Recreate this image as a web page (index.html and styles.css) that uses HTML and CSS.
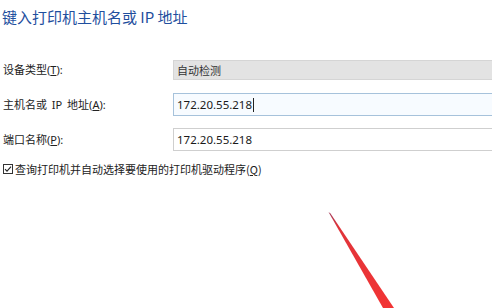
FILE: index.html
```html
<!DOCTYPE html>
<html lang="zh-CN">
<head>
<meta charset="utf-8">
<title>键入打印机主机名或 IP 地址</title>
<link rel="stylesheet" href="styles.css">
</head>
<body>
<div class="page">
  <h1 class="title">键入打印机主机名或 IP 地址</h1>
  <div class="form">
    <div class="row">
      <label class="label">设备类型(<u>T</u>):</label>
      <div class="field field-readonly">自动检测</div>
    </div>
    <div class="row">
      <label class="label">主机名或 IP 地址(<u>A</u>):</label>
      <div class="field field-focus">172.20.55.218<span class="caret"></span></div>
    </div>
    <div class="row">
      <label class="label">端口名称(<u>P</u>):</label>
      <div class="field">172.20.55.218</div>
    </div>
  </div>
  <div class="check-row">
    <svg class="checkbox" width="10" height="10" viewBox="0 0 10 10">
      <rect x="0.5" y="0.5" width="9" height="9" fill="#fff" stroke="#333" stroke-width="1"/>
      <path d="M2 5.2 L4 7.2 L8 2.6" fill="none" stroke="#222" stroke-width="1.1"/>
    </svg>
    <span class="check-text">查询打印机并自动选择要使用的打印机驱动程序(<u>Q</u>)</span>
  </div>
</div>
<svg class="arrow" width="492" height="308" viewBox="0 0 492 308">
  <defs>
    <linearGradient id="ag" x1="0" y1="0" x2="0" y2="1">
      <stop offset="0" stop-color="#a03a5a"/>
      <stop offset="0.15" stop-color="#e0343a"/>
      <stop offset="1" stop-color="#f23434"/>
    </linearGradient>
  </defs>
  <polygon points="328.5,212 330.5,213.5 394,308 383,308" fill="url(#ag)"/>
</svg>
</body>
</html>
```
FILE: styles.css
```css
html, body {
  margin: 0;
  padding: 0;
  background: #ffffff;
}
body {
  width: 492px;
  height: 308px;
  overflow: hidden;
  position: relative;
  font-family: "Noto Sans", "Noto Sans CJK SC", sans-serif;
  color: #222222;
}
.page {
  padding: 7px 0 0 2px;
}
.title {
  margin: 0;
  font-family: "Noto Sans CJK SC", "Noto Sans", sans-serif;
  font-weight: normal;
  font-size: 15px;
  line-height: 20px;
  color: #1f4f9e;
}
.form {
  margin-top: 31px;
  display: flex;
  flex-direction: column;
  gap: 12px;
}
.row {
  display: flex;
  align-items: center;
  height: 23px;
}
.label {
  width: 170px;
  flex: none;
  padding-left: 1px;
  font-size: 11px;
  line-height: 16px;
  word-spacing: 2px;
  font-family: "Noto Sans", "Noto Sans CJK SC", sans-serif;
}
.label u, .check-text u {
  text-underline-offset: 1px;
}
.field {
  box-sizing: border-box;
  width: 340px;
  flex: none;
  height: 23px;
  border: 1px solid #cfcfcf;
  background: #ffffff;
  padding-left: 3px;
  font-size: 11.5px;
  line-height: 21px;
  white-space: nowrap;
  color: #1a1a1a;
}
.field-readonly {
  height: 20px;
  line-height: 18px;
  background: #e3e3e3;
  border-color: #d5d5d5;
  font-family: "Noto Sans CJK SC", sans-serif;
  font-size: 11px;
  color: #333;
}
.field-focus {
  border-color: #a6c2db;
  background: #f7fbff;
}
.caret {
  display: inline-block;
  width: 1px;
  height: 14px;
  background: #222;
  vertical-align: -3px;
  margin-left: 1px;
}
.check-row {
  margin-top: 9px;
  height: 18px;
  display: flex;
  align-items: center;
  gap: 2px;
  padding-left: 1px;
}
.checkbox {
  flex: none;
}
.check-text {
  font-size: 11px;
  line-height: 16px;
  font-family: "Noto Sans CJK SC", "Noto Sans", sans-serif;
}
.arrow {
  position: absolute;
  left: 0;
  top: 0;
  pointer-events: none;
}
```
